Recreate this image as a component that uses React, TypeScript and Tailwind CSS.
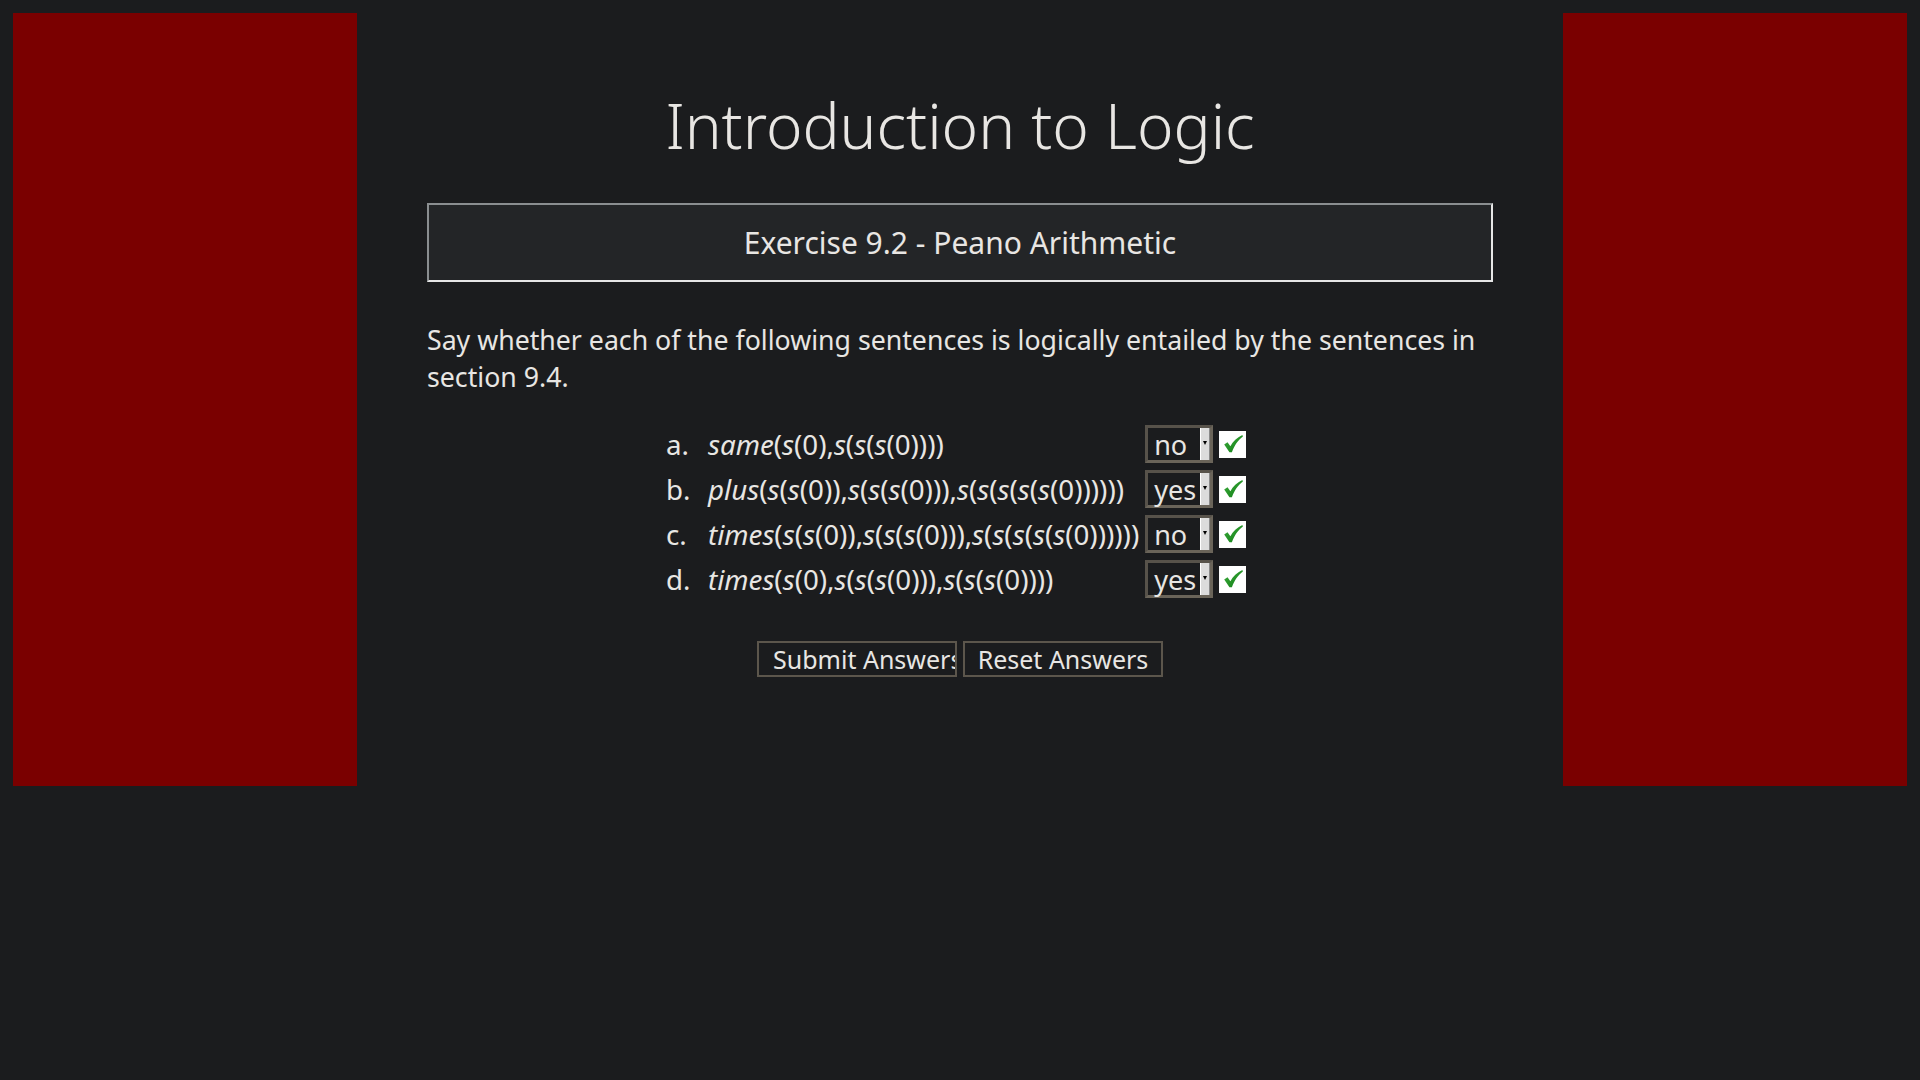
import React from "react";

const I = ({ children }: { children: React.ReactNode }) => <i className="italic">{children}</i>;

function Sel({ value }: { value: string }) {
  return (
    <div className="flex h-[38px] w-[68px] border-[3px] border-t-[#57524a] border-l-[#57524a] border-b-[#6a6459] border-r-[#6a6459] bg-[#1b1c1e]">
      <div className="flex flex-1 items-center pl-[6px] text-[27px] leading-none text-[#e8e6e3]">{value}</div>
      <div className="relative w-[10px] border-l border-l-white border-r border-r-[#8a8a8a] bg-[#dcdcdc]">
        <div className="absolute left-[2px] top-[13px] h-0 w-0 border-x-[2.5px] border-t-[4px] border-x-transparent border-t-black" />
      </div>
    </div>
  );
}

function Check() {
  return (
    <div className="flex h-[27px] w-[27px] items-center justify-center bg-white">
      <svg width="22" height="22" viewBox="0 0 20 20">
        <defs>
          <linearGradient id="g" x1="0" y1="0" x2="1" y2="1">
            <stop offset="0" stopColor="#3fae3f" />
            <stop offset="1" stopColor="#0d7a12" />
          </linearGradient>
        </defs>
        <path d="M2 10.5 L5 8.5 L7.6 12 C10 7.5 13.5 4.2 18.5 1.8 L19 3.2 C14.5 6.5 11.5 10.8 9 17.5 L6.8 17.5 Z" fill="url(#g)" />
      </svg>
    </div>
  );
}

const rows: { l: string; f: React.ReactNode; v: string }[] = [
  {
    l: "a.",
    f: (
      <>
        <I>same</I>(<I>s</I>(0),<I>s</I>(<I>s</I>(<I>s</I>(0))))
      </>
    ),
    v: "no",
  },
  {
    l: "b.",
    f: (
      <>
        <I>plus</I>(<I>s</I>(<I>s</I>(0)),<I>s</I>(<I>s</I>(<I>s</I>(0))),<I>s</I>(<I>s</I>(<I>s</I>(<I>s</I>(<I>s</I>(0))))))
      </>
    ),
    v: "yes",
  },
  {
    l: "c.",
    f: (
      <>
        <I>times</I>(<I>s</I>(<I>s</I>(0)),<I>s</I>(<I>s</I>(<I>s</I>(0))),<I>s</I>(<I>s</I>(<I>s</I>(<I>s</I>(<I>s</I>(0))))))
      </>
    ),
    v: "no",
  },
  {
    l: "d.",
    f: (
      <>
        <I>times</I>(<I>s</I>(0),<I>s</I>(<I>s</I>(<I>s</I>(0))),<I>s</I>(<I>s</I>(<I>s</I>(0))))
      </>
    ),
    v: "yes",
  },
];

export default function App() {
  return (
    <div
      className="flex min-h-[1080px] w-full items-start bg-[#1b1c1e] p-[13px] text-[#e8e6e3]"
      style={{ fontFamily: '"Noto Sans", "Open Sans", sans-serif' }}
    >
      <div className="h-[773px] w-[344px] shrink-0 bg-[#7a0000]" />
      <div className="flex-1 px-[70px] pt-[75px]">
        <h1 className="text-center text-[62px] font-light leading-[74px]">Introduction to Logic</h1>
        <div className="mt-[41px] flex h-[79px] items-center justify-center border-2 border-t-[#8a8e90] border-l-[#8a8e90] border-b-[#e6e6e6] border-r-[#e6e6e6] bg-[#232527] text-[30px]">
          Exercise 9.2 - Peano Arithmetic
        </div>
        <p className="mt-[39px] text-[26.7px] leading-[37px]">
          Say whether each of the following sentences is logically entailed by the sentences in section 9.4.
        </p>
        <div className="mt-[30px] ml-[239px] grid w-max grid-cols-[36px_auto_auto_auto] items-center gap-x-[6px] gap-y-[7px] text-[27.7px] leading-[38px]">
          {rows.map((r) => (
            <React.Fragment key={r.l}>
              <div className="whitespace-nowrap">{r.l}</div>
              <div className="whitespace-nowrap">{r.f}</div>
              <Sel value={r.v} />
              <Check />
            </React.Fragment>
          ))}
        </div>
        <div className="mt-[43px] flex justify-center gap-[6px]">
          <button className="h-[36px] w-[200px] overflow-hidden whitespace-nowrap border-2 border-[#5c564c] bg-[#1b1c1e] pl-[14px] text-left text-[25px] leading-none text-[#e8e6e3]">
            Submit Answers
          </button>
          <button className="h-[36px] w-[200px] overflow-hidden whitespace-nowrap border-2 border-[#5c564c] bg-[#1b1c1e] text-center text-[25px] leading-none text-[#e8e6e3]">
            Reset Answers
          </button>
        </div>
      </div>
      <div className="h-[773px] w-[344px] shrink-0 bg-[#7a0000]" />
    </div>
  );
}
